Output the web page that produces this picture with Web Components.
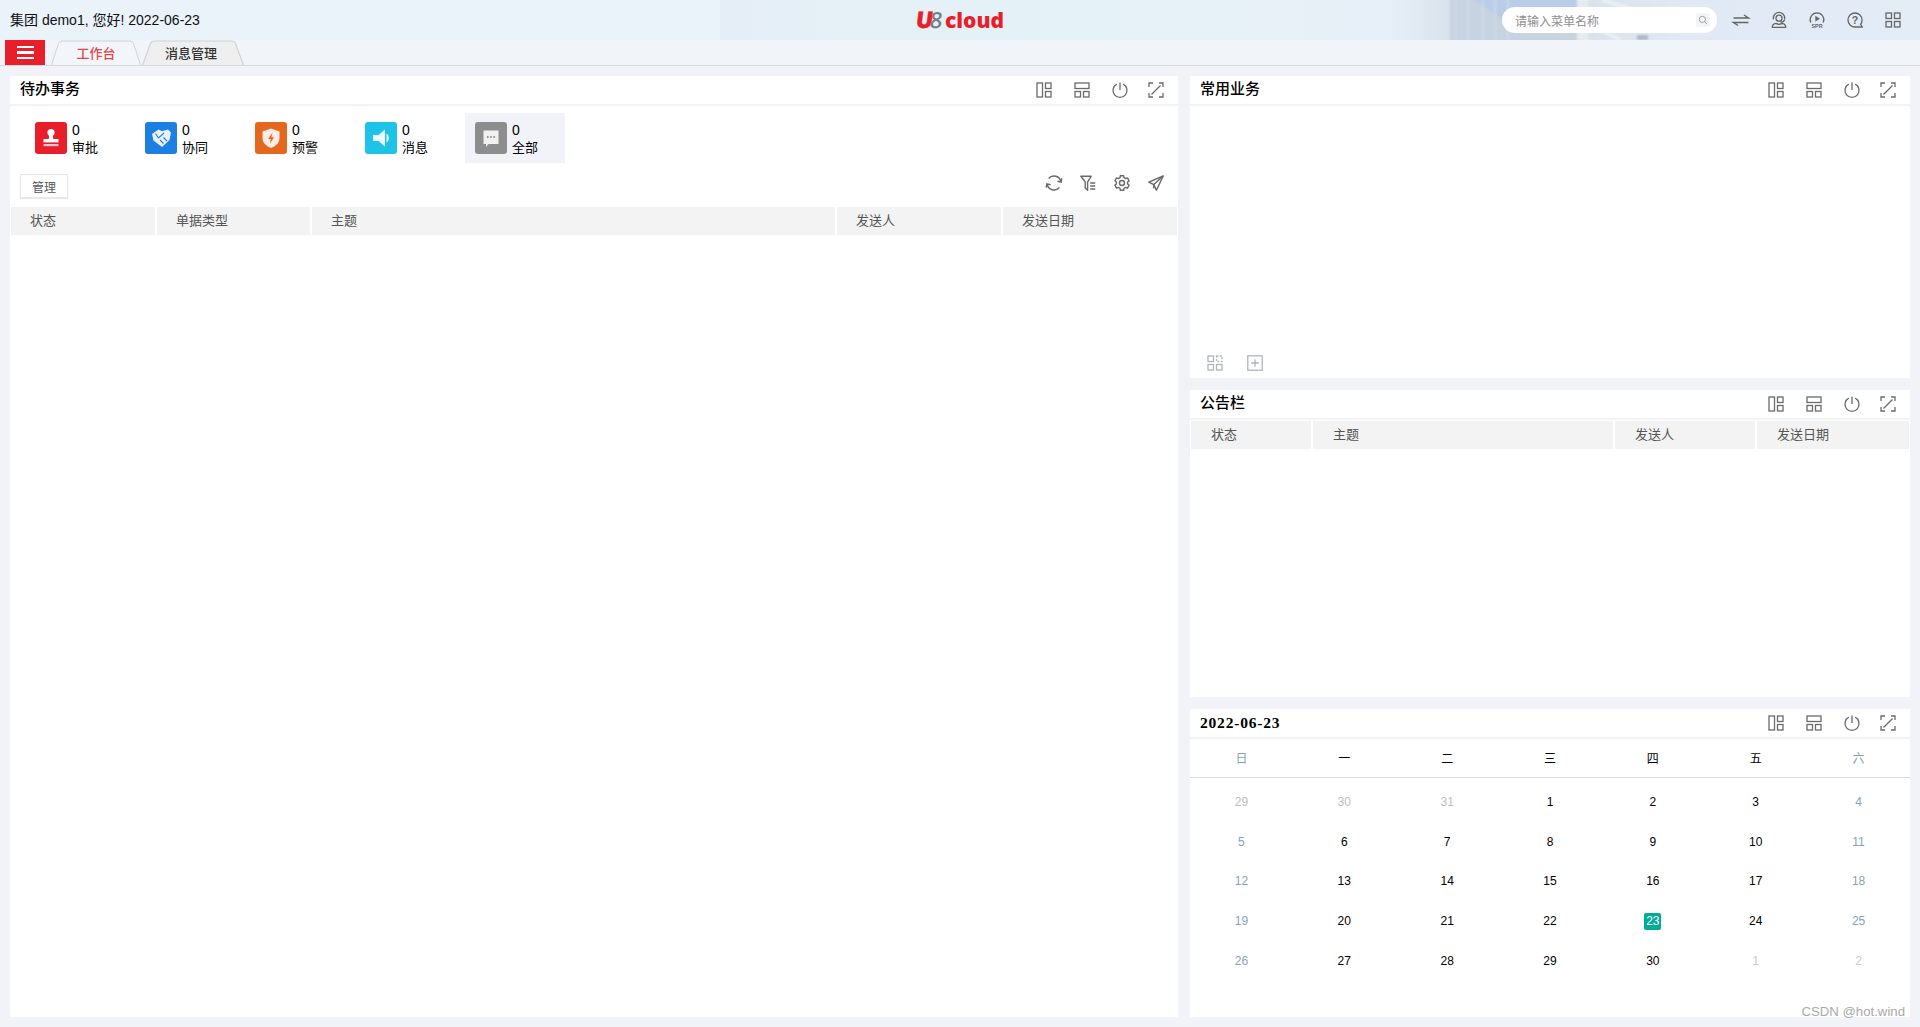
<!DOCTYPE html>
<html lang="zh">
<head>
<meta charset="utf-8">
<title>U8 cloud</title>
<style>
html,body{margin:0;height:100%;background:#f1f3f9;font-family:"Liberation Sans","Noto Sans CJK SC",sans-serif;}
u8-app{height:1027px;}
</style>
</head>
<body>
<u8-app></u8-app>
<script>
function gearPath(){
  const pts=[];
  const p=(a,r)=>{const t=(a-90)*Math.PI/180;return (8+r*Math.cos(t)).toFixed(2)+' '+(8+r*Math.sin(t)).toFixed(2);};
  for(let i=0;i<6;i++){
    const a=i*60;
    pts.push(p(a-13,7.5),p(a+13,7.5),p(a+20,5.7),p(a+40,5.7));
  }
  return 'M'+pts.join('L')+'Z';
}
const ICONS = {
  layoutL:'<rect x="1" y="1" width="5.5" height="14"/><rect x="9.5" y="1" width="5.5" height="5.5"/><rect x="9.5" y="9.5" width="5.5" height="5.5"/>',
  layoutT:'<rect x="1" y="1" width="14" height="5.5"/><rect x="1" y="9.5" width="5.5" height="5.5"/><rect x="9.5" y="9.5" width="5.5" height="5.5"/>',
  power:'<path d="M4.8 2.2A7 7 0 1 0 11.2 2.2"/><path d="M8 .5V8"/>',
  expand:'<path d="M1 5V1H5M11 1H15V5M1 11V15H5M15 11V15H11M3.5 12.5L12.5 3.5"/>',
  refresh:'<path d="M15 6.8A7.2 7.2 0 0 0 2.6 3.4" stroke-width="1.5"/><path d="M11.4 6.3L15.1 7.1L15.8 3.3" stroke-width="1.5"/><path d="M1 9.2A7.2 7.2 0 0 0 13.4 12.6" stroke-width="1.5"/><path d="M4.6 9.7L.9 8.9L.2 12.7" stroke-width="1.5"/>',
  filter:'<path d="M.8 1.3H11.2L7.6 6.8V15.2L5.2 13V6.8Z" stroke-linejoin="round" stroke-width="1.4"/><path d="M10.2 8H15.2M10.2 11H15.2M10.2 14H15.2" stroke-width="1.3"/>',
  gear:'<path d="'+gearPath()+'" stroke-linejoin="round" stroke-width="1.4"/><circle cx="8" cy="8" r="2.5" stroke-width="1.4"/>',
  send:'<path d="M15.2 1L.8 7.2L5.8 9.6L8.4 15.2Z" stroke-linejoin="round" stroke-width="1.4"/><path d="M15.2 1L5.8 9.6V13.4" stroke-width="1.4"/>',
  swap:'<path d="M.5 6H15.5L11 3" stroke-width="1.5"/><path d="M15.5 10.5H.5L5 13.5" stroke-width="1.5"/>',
  headset:'<circle cx="8" cy="6.2" r="3"/><path d="M2.4 7.6V6A5.6 5.6 0 0 1 13.6 6V7.6"/><path d="M13.6 7.6C13.2 9.4 11.6 10.2 9.6 10.2"/><path d="M1.2 15.3C1.4 12.8 3.2 11.6 5 11.4C6.8 12.5 9.2 12.5 11 11.4C12.8 11.6 14.6 12.8 14.8 15.3Z" stroke-linejoin="round"/>',
  spr:'<path d="M1.8 10.5A6.8 6.8 0 1 1 14.2 10.5"/><path d="M6.3 3.8L11 6.7L6.3 9.6Z" fill="currentColor" stroke="none"/><text x="8" y="15.6" text-anchor="middle" font-size="5.4" font-weight="700" font-family="Liberation Sans" fill="currentColor" stroke="none">SPR</text>',
  help:'<path d="M15 8A7 7 0 1 0 8 15H15.4L13.6 12.4A7 7 0 0 0 15 8Z" stroke-linejoin="round"/><text x="8" y="11.8" text-anchor="middle" font-size="10.5" font-weight="700" font-family="Liberation Sans" fill="currentColor" stroke="none">?</text>',
  grid:'<rect x="1" y="1" width="5.5" height="5.5"/><rect x="9.5" y="1" width="5.5" height="5.5"/><rect x="1" y="9.5" width="5.5" height="5.5"/><rect x="9.5" y="9.5" width="5.5" height="5.5"/>',
  gridDash:'<rect x="1" y="1" width="5.5" height="5.5"/><rect x="9.5" y="1" width="5.5" height="5.5" stroke-dasharray="2 1.4"/><rect x="1" y="9.5" width="5.5" height="5.5"/><rect x="9.5" y="9.5" width="5.5" height="5.5"/>',
  plusBox:'<rect x=".8" y=".8" width="14.4" height="14.4"/><path d="M4.2 8H11.8M8 4.2V11.8"/>',
  search:'<circle cx="7" cy="7" r="5"/><path d="M10.6 10.6L14.5 14.5"/>'
};
const TILES = {
  stamp:'<circle cx="16" cy="10.5" r="3.6" fill="#fff"/><path d="M14.4 13H17.6L18.3 17H13.7Z" fill="#fff"/><rect x="8.5" y="17" width="15" height="3.4" fill="#fff"/><rect x="8.5" y="22" width="15" height="2.2" fill="#fff" opacity=".75"/>',
  hands:'<path d="M7 12L13.5 7.5L17 9.2L23 7.5L26 10.5L24.5 18L17 25L8.5 18.5Z" fill="#e8f2fd"/><path d="M10.5 11.5L13.5 16L19 11M15 18L18.5 21.5M18.5 15.5L22 19" fill="none" stroke="#1c80e3" stroke-width="1.1"/>',
  shield:'<path d="M16 6.5L24.5 9.5V16C24.5 21 20.5 24.2 16 26C11.5 24.2 7.5 21 7.5 16V9.5Z" fill="#fff" opacity=".88"/><path d="M17.5 10.5L13.2 17H15.8L14.8 22L19 15.2H16.4Z" fill="#e5671d"/>',
  speaker:'<path d="M8 13H13.5L20 7.5V24.5L13.5 19H8Z" fill="#eaf9fd"/><path d="M21.5 11.5C24.5 12.5 24.5 19.5 21.5 20.5Z" fill="#eaf9fd"/>',
  bubble:'<path d="M8.5 8.5H23.5V22H13.5L11 25V22H8.5Z" fill="#f1f1f1"/><circle cx="12.8" cy="15" r="1" fill="#8d8d8d"/><circle cx="16" cy="15" r="1" fill="#8d8d8d"/><circle cx="19.2" cy="15" r="1" fill="#8d8d8d"/>'
};

function def(name, css, html, init){
  customElements.define(name, class extends HTMLElement{
    constructor(){
      super();
      const r = this.attachShadow({mode:'open'});
      r.innerHTML = '<style>'+css+'</style>'+(typeof html==='function'?html(this):html);
    }
    connectedCallback(){ if(init) init(this, this.shadowRoot); }
  });
}

def('u-icon', ':host{display:inline-flex;width:16px;height:16px;color:#6a6a6a}svg{width:100%;height:100%;display:block;fill:none;stroke:currentColor;stroke-width:1.3;overflow:visible}',
  '', (el,r)=>{ r.innerHTML += '<svg viewBox="0 0 16 16">'+(ICONS[el.getAttribute('name')]||'')+'</svg>'; });

def('top-bar', `
  :host{display:grid;grid-template-columns:1fr auto 1fr;align-items:center;height:40px;position:relative;background:#eaf2fa;overflow:hidden;font-size:14px;color:#111}
  .art{position:absolute;left:720px;top:0;width:1200px;height:40px}
  .greet,.logo,.tools{position:relative}
  .greet{padding:0 0 3px 10px;white-space:nowrap}
  .logo{display:flex;align-items:baseline;font-family:"Open Sans","Liberation Sans",sans-serif;font-weight:800;font-size:21px;line-height:24px;color:#e81e2a;white-space:nowrap;margin-top:-1px}
  .logo i{display:inline-block;font-style:normal;font-size:23px;transform:skewX(-7deg);-webkit-text-stroke:.3px currentColor}
  .logo i.e{color:#7b7d82;margin-left:-3px;-webkit-text-stroke:0;font-weight:600;font-size:22px}
  .logo b{margin-left:2px;font-weight:800}
  .tools{display:flex;align-items:center;justify-content:flex-end;padding-right:19px;gap:22px}
  .search{width:215px;height:26px;box-sizing:border-box;background:#fff;border-radius:13px;display:flex;align-items:center;justify-content:space-between;padding:0 7px 0 13px;margin-right:-6px;font-size:12px;color:#8e8e8e}
  .mag{width:14px;height:14px;background:#f3f4f6;display:flex;align-items:center;justify-content:center;border-radius:2px}
  .mag u-icon{width:10px;height:10px;color:#8b9096}
  u-icon{color:#666}
`,`
  <svg class="art" viewBox="0 0 1200 40" preserveAspectRatio="none" aria-hidden="true">
    <defs>
      <linearGradient id="g" x1="0" x2="1"><stop offset="0" stop-color="#e5eef6"/><stop offset=".3" stop-color="#e5f2f8"/><stop offset=".47" stop-color="#e8f1f8"/><stop offset=".56" stop-color="#e6eff7"/><stop offset=".62" stop-color="#d6e0ea"/><stop offset=".68" stop-color="#cfd9e5"/></linearGradient>
      <linearGradient id="f" x1="0" x2="1"><stop offset="0" stop-color="#d8e2ee"/><stop offset=".3" stop-color="#e0e9f4"/><stop offset="1" stop-color="#e4edf7"/></linearGradient>
      <filter id="b"><feGaussianBlur stdDeviation=".9"/></filter>
    </defs>
    <rect width="1200" height="40" fill="url(#g)"/>
    <g filter="url(#b)">
      <rect x="856" y="-2" width="350" height="44" fill="url(#f)"/>
      <rect x="730" y="-2" width="128" height="44" fill="#c8d3e1"/>
      <polygon points="752,-2 858,-2 858,32 800,32" fill="#b9cde8"/>
      <path d="M735 0V40M748 0V40M763 0V40M775 0V40M788 0V40" stroke="#d5dde7" stroke-width="1.4"/>
      <rect x="857" y="-2" width="11" height="44" fill="#e6ebf2"/>
      <path d="M869 10L930 32M869 24L900 40M882 0L950 20" stroke="#edf2f7" stroke-width="3"/>
      <rect x="917" y="35" width="11" height="5" fill="#aeb8c3"/>
    </g>
  </svg>
  <div class="greet">集团 demo1, 您好! 2022-06-23</div>
  <div class="logo"><i>U</i><i class="e">8</i><b>cloud</b></div>
  <div class="tools">
    <div class="search"><span>请输入菜单名称</span><span class="mag"><u-icon name="search"></u-icon></span></div>
    <u-icon name="swap"></u-icon><u-icon name="headset"></u-icon><u-icon name="spr"></u-icon><u-icon name="help"></u-icon><u-icon name="grid"></u-icon>
  </div>
`);

def('tab-item', `
  :host{display:flex;align-items:center;justify-content:center;position:relative;height:25px;box-sizing:border-box;font-size:13px;font-weight:500;color:#333}
  :host([active]){color:#e2474a}
  svg{position:absolute;inset:0;width:100%;height:100%}
  span{position:relative}
`, el=>`
  <svg viewBox="0 0 90 25" preserveAspectRatio="none"><path d="M.5 25L7.5 3.5Q8.3 1 11 1H79Q81.7 1 82.5 3.5L89.5 25" fill="${el.hasAttribute('active')?'#f2f5fa':'#efefef'}" stroke="#cfd2d6"/></svg>
  <span><slot></slot></span>
`);

def('tab-bar', `
  :host{display:flex;height:26px;box-sizing:border-box;border-bottom:1px solid #d5d8dc;background:#f1f4f9}
  .menu{width:40px;height:25px;margin-left:5px;background:#e81e2a;display:flex;flex-direction:column;justify-content:center;gap:3px;align-items:center}
  .menu i{display:block;width:17px;height:2.5px;background:#fff}
  .tabs{display:flex;margin-left:6px;gap:1px}
  tab-item:first-child{width:90px}
  tab-item:last-child{width:102px;padding-right:4px}
`,`
  <div class="menu"><i></i><i></i><i></i></div>
  <div class="tabs"><tab-item active>工作台</tab-item><tab-item>消息管理</tab-item></div>
`);

def('portal-panel', `
  :host{display:flex;flex-direction:column;min-height:0;background:#fff}
  header{flex:none;display:flex;align-items:center;justify-content:space-between;height:28px;padding:0 14px 0 10px;border-bottom:2px solid #f1f3f9;font-size:15px;font-weight:500;color:#000}
  .ic{display:flex;gap:22px}
  .ic u-icon:last-child{margin-left:-2px}
  .t{white-space:nowrap;padding-bottom:2px;line-height:22px}
  :host([serif]) .t{font-family:"Liberation Serif",serif;font-weight:700;font-size:15.5px;letter-spacing:.8px;padding-bottom:0}
  main{flex:1;min-height:0;display:flex;flex-direction:column}
`, el=>`
  <header><span class="t">${el.getAttribute('heading')}</span><span class="ic"><u-icon name="layoutL"></u-icon><u-icon name="layoutT"></u-icon><u-icon name="power"></u-icon><u-icon name="expand"></u-icon></span></header>
  <main><slot></slot></main>
`);

def('todo-tile', `
  :host{display:flex;align-items:center;gap:5px;width:100px;height:50px;box-sizing:border-box;padding-left:10px;font-size:13px;line-height:18px;color:#000}
  :host([active]){background:#f1f3f9}
  svg{width:32px;height:32px;display:block;border-radius:3px;flex:none}
  span{display:block}
  .txt{margin-top:2px}
  .n{font-size:14px}
`, el=>`
  <svg viewBox="0 0 32 32" style="background:${el.getAttribute('color')}">${TILES[el.getAttribute('icon')]}</svg>
  <div class="txt"><span class="n">${el.getAttribute('count')}</span><span>${el.getAttribute('label')}</span></div>
`);

def('data-table', `
  :host{display:grid;height:28px;background:#f3f3f3;margin:0 1px;font-size:13px;color:#555;line-height:28px;--pad:20px}
  div{padding-left:var(--pad);border-right:2px solid #fff;white-space:nowrap;overflow:hidden}
  div:first-child{padding-left:20px}
  div:last-child{border-right:0}
`, '', (el,r)=>{
  el.style.gridTemplateColumns = el.getAttribute('cols');
  r.innerHTML += el.getAttribute('heads').split(',').map(h=>`<div>${h}</div>`).join('');
});

def('todo-view', `
  :host{display:flex;flex-direction:column;flex:1}
  .tiles{display:flex;gap:10px;padding:7px 0 0 15px}
  .bar{display:flex;justify-content:space-between;align-items:flex-start;margin-top:11px;padding:0 14px 0 10px;height:24px}
  button{width:48px;height:24px;padding:0;background:#fff;border:1px solid #e4e6eb;box-shadow:0 1px 1px #e8eaee;font:12px "Liberation Sans","Noto Sans CJK SC",sans-serif;color:#555}
  .act{display:flex;gap:18px;margin-top:1px}
  data-table{margin-top:9px;--pad:19px}
`,`
  <div class="tiles">
    <todo-tile color="#e81e2a" icon="stamp" count="0" label="审批"></todo-tile>
    <todo-tile color="#1c80e3" icon="hands" count="0" label="协同"></todo-tile>
    <todo-tile color="#e5671d" icon="shield" count="0" label="预警"></todo-tile>
    <todo-tile color="#20c3e8" icon="speaker" count="0" label="消息"></todo-tile>
    <todo-tile active color="#8d8d8d" icon="bubble" count="0" label="全部"></todo-tile>
  </div>
  <div class="bar"><button>管理</button><span class="act"><u-icon name="refresh"></u-icon><u-icon name="filter"></u-icon><u-icon name="gear"></u-icon><u-icon name="send"></u-icon></span></div>
  <data-table cols="146px 155px 525px 166px 174px" heads="状态,单据类型,主题,发送人,发送日期"></data-table>
`);

def('common-view', `
  :host{display:flex;flex:1;align-items:flex-end;padding:0 0 7px 17px;gap:24px}
  u-icon{color:#b0b4b9}
`,`<u-icon name="gridDash"></u-icon><u-icon name="plusBox"></u-icon>`);

def('cal-view', `
  :host{display:block;font-family:"Liberation Sans","Noto Sans CJK SC",sans-serif;font-size:12px;color:#000}
  .wk,.days{display:grid;grid-template-columns:repeat(7,1fr);text-align:center}
  .wk{height:38px;line-height:40px;border-bottom:1px solid #dcdee2}
  .days{padding-top:4px;grid-auto-rows:39.75px;align-items:center;justify-items:center}
  .we{color:#83a3b8}
  .off{color:#bdbdbd}
  .off.n{color:#c4cdd3}
  .today{background:#00ab97;color:#fff;width:17px;height:17px;line-height:17px;border-radius:2px}
`,'',(el,r)=>{
  const wk='日一二三四五六'.split('').map((d,i)=>`<div class="${i%6?'':'we'}">${d}</div>`).join('');
  const list=[29,30,31].map(d=>[d,'off']);
  for(let d=1;d<=30;d++) list.push([d,'']);
  list.push([1,'off n'],[2,'off n']);
  const days=list.map(([d,c],i)=>{
    let k=c; if(!c&&i%7%6===0) k='we';
    if(!c&&d===23) k='today';
    return `<div class="${k}">${d}</div>`;
  }).join('');
  r.innerHTML+=`<div class="wk">${wk}</div><div class="days">${days}</div>`;
});

def('u8-app', `
  :host{display:flex;flex-direction:column;position:relative;background:#f1f3f9}
  .main{flex:1;min-height:0;display:grid;grid-template-columns:1168px 720px;gap:12px;padding:10px}
  .col{display:grid;grid-template-rows:302px 307px 308px;gap:12px;min-height:0}
  .table2{margin-top:1px}
  .mark{position:absolute;right:15px;bottom:6px;font-size:13.2px;line-height:18px;color:#a9a9a9}
`,`
  <top-bar></top-bar>
  <tab-bar></tab-bar>
  <div class="main">
    <portal-panel heading="待办事务"><todo-view></todo-view></portal-panel>
    <div class="col">
      <portal-panel heading="常用业务"><common-view></common-view></portal-panel>
      <portal-panel heading="公告栏"><data-table class="table2" cols="122px 302px 142px 152px" heads="状态,主题,发送人,发送日期"></data-table></portal-panel>
      <portal-panel heading="2022-06-23" serif><cal-view></cal-view></portal-panel>
    </div>
  </div>
  <div class="mark">CSDN @hot.wind</div>
`);
</script>
</body>
</html>
